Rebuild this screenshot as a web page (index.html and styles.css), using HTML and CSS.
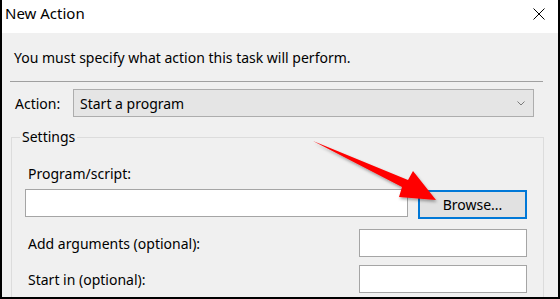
FILE: index.html
```html
<!DOCTYPE html>
<html lang="en">
<head>
  <meta charset="UTF-8"/>
  <title>New Action</title>
  <link rel="stylesheet" href="styles.css">
</head>
<body>

<div class="dialog">
  <div class="titlebar">
    <span class="title">New Action</span>
    <svg class="close" width="12" height="12" viewBox="0 0 12 12">
      <path d="M0.5 0.5 L11.5 11.5 M11.5 0.5 L0.5 11.5" stroke="#000" stroke-width="1" fill="none"/>
    </svg>
  </div>

  <div class="content">
    <p class="intro">You must specify what action this task will perform.</p>
    <div class="separator"></div>

    <div class="action-row">
      <label class="action-label">Action:</label>
      <div class="select">
        <span>Start a program</span>
        <svg class="chevron" width="8" height="5" viewBox="0 0 8 5">
          <path d="M0.5 0.5 L4 4 L7.5 0.5" stroke="#7a7a7a" stroke-width="1" fill="none"/>
        </svg>
      </div>
    </div>

    <!-- group box -->
    <fieldset class="settings">
      <legend>Settings</legend>
      <label class="field-label">Program/script:</label>
      <div class="program-row">
        <input type="text" class="textbox wide"/>
        <button class="browse">Browse...</button>
      </div>
      <div class="option-row">
        <label>Add arguments (optional):</label>
        <input type="text" class="textbox short"/>
      </div>
      <div class="option-row second">
        <label>Start in (optional):</label>
        <input type="text" class="textbox short"/>
      </div>
    </fieldset>
  </div>

  <!-- annotation arrow -->
  <svg class="arrow" width="560" height="299" viewBox="0 0 560 299">
    <defs>
      <filter id="shadow" x="-10%" y="-10%" width="130%" height="130%">
        <feDropShadow dx="1" dy="2" stdDeviation="1.5" flood-color="#000" flood-opacity="0.35"/>
      </filter>
    </defs>
    <polygon points="313,141 408,180 413,171 436,200 399,197 402,187" fill="#ff0000" filter="url(#shadow)"/>
  </svg>
</div>

</body>
</html>
```

FILE: styles.css
```css
body {
  margin: 0;
  font-family: "Noto Sans", "Open Sans", sans-serif;
  font-size: 14px;
  color: #000;
}
.dialog {
  position: relative;
  width: 560px;
  height: 299px;
  box-sizing: border-box;
  border: 2px solid #000;
  border-top: 0;
  overflow: hidden;
  background: #f0f0f0;
}
.titlebar {
  height: 33px;
  background: #fff;
  display: flex;
  justify-content: space-between;
  align-items: flex-start;
}
.title {
  font-size: 15px;
  line-height: 20px;
  padding: 3px 0 0 3px;
}
.close {
  margin: 8px 13px 0 0;
}
.content {
  height: 264px;
  padding: 0 15px 0 8px;
}
.intro {
  margin: 15px 0 0;
  padding-left: 4px;
  line-height: 20px;
}
.separator {
  margin-top: 13px;
  border-top: 1px solid #a0a0a0;
}
.action-row {
  display: flex;
  align-items: center;
  margin-top: 7px;
  margin-right: 9px;
}
.action-label {
  width: 58px;
  padding-left: 5px;
}
.select {
  flex: 1;
  height: 28px;
  box-sizing: border-box;
  background: #e5e5e5;
  border: 1px solid #adadad;
  display: flex;
  align-items: center;
  justify-content: space-between;
  padding: 0 8px 0 6px;
}
.settings {
  margin: 10px -1px 0 1px;
  border: 1px solid #dcdcdc;
  padding: 0 16px 60px 13px;
}
.settings legend {
  margin-left: -5px;
  padding: 0 2px;
  line-height: 20px;
}
.field-label {
  display: block;
  margin-top: 17px;
  padding-left: 3px;
  line-height: 20px;
}
.textbox {
  box-sizing: border-box;
  height: 28px;
  margin: 0;
  background: #fff;
  border: 1px solid #a5a5a5;
  border-radius: 0;
  font: inherit;
}
.program-row {
  display: flex;
  align-items: flex-start;
  gap: 10px;
  margin-top: 5px;
}
.wide {
  flex: 1;
}
.browse {
  width: 109px;
  height: 29px;
  margin-top: 1px;
  background: #e1e1e1;
  border: 2px solid #0078d7;
  font: inherit;
  color: #000;
  padding: 0;
}
.option-row {
  display: flex;
  align-items: center;
  justify-content: space-between;
  margin-top: 10px;
}
.option-row.second {
  margin-top: 8px;
}
.option-row label {
  padding-left: 3px;
}
.short {
  width: 168px;
}
.arrow {
  position: absolute;
  left: -2px;
  top: 0;
  pointer-events: none;
}
```
